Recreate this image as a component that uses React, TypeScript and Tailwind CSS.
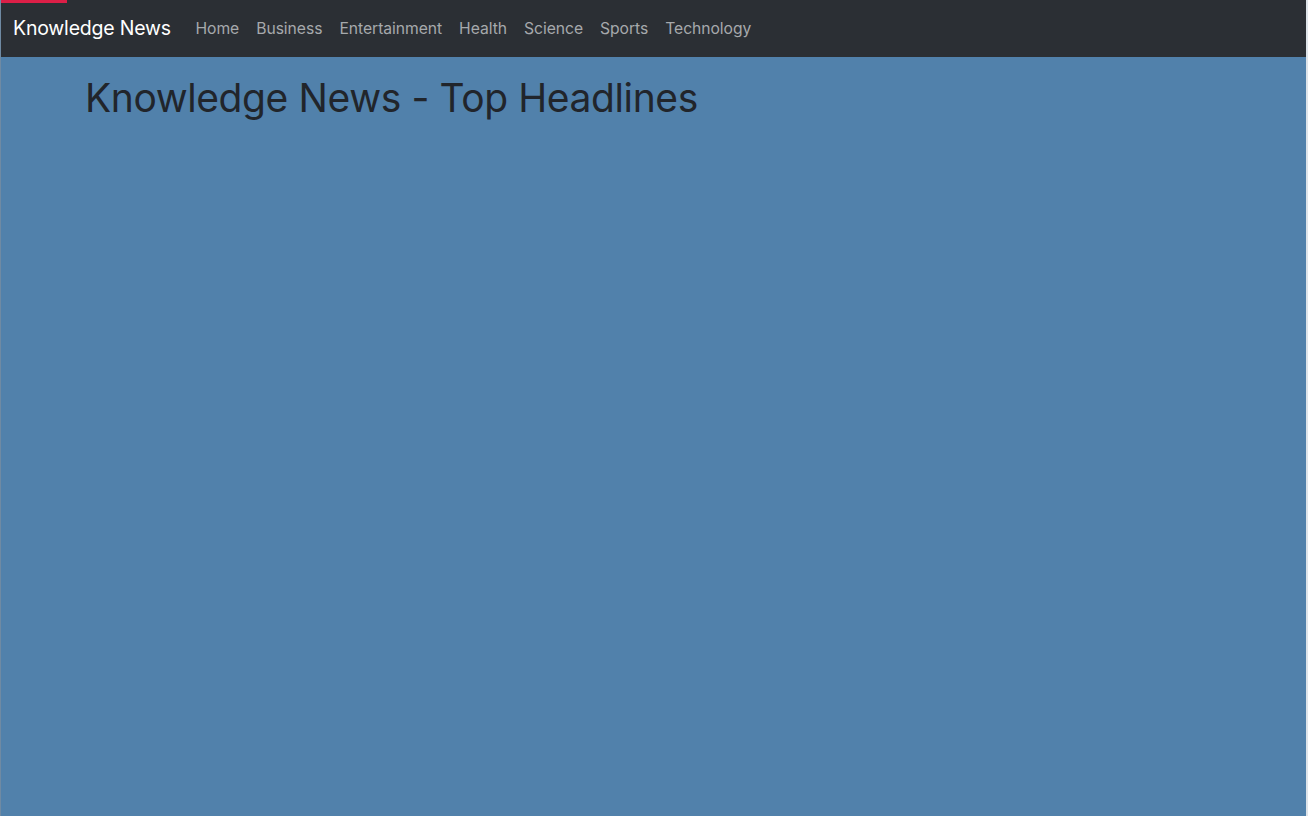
const links = ['Home', 'Business', 'Entertainment', 'Health', 'Science', 'Sports', 'Technology'];

export default function App() {
  return (
    <div
      className="relative flex min-h-[816px] w-full flex-col border-l border-[#6f8aa3] border-r-2 border-r-[#dfe5ea] bg-[#5181ab]"
      style={{ fontFamily: 'Inter, "Noto Sans", sans-serif' }}
    >
      {/* loading bar */}
      <div className="absolute left-0 top-0 h-[3px] w-[66px] bg-[#dc1f47]" />

      {/* Navbar */}
      <nav className="flex h-[57px] items-center bg-[#2b2f34] px-3">
        <a className="mr-[16px] text-[19.5px] tracking-[-0.2px] text-white">Knowledge News</a>
        <ul className="flex items-center pb-[1px]">
          {links.map((l) => (
            <li key={l}>
              <a className="px-[8.5px] text-[15.7px] tracking-[-0.05px] text-[#a6a9ac]">{l}</a>
            </li>
          ))}
        </ul>
      </nav>

      {/* Headline */}
      <div className="px-[84px] pt-[18px]">
        <h1 className="text-[39px] font-normal leading-[1.2] tracking-[-0.4px] text-[#21252b]">
          Knowledge News - Top Headlines
        </h1>
      </div>
    </div>
  );
}
